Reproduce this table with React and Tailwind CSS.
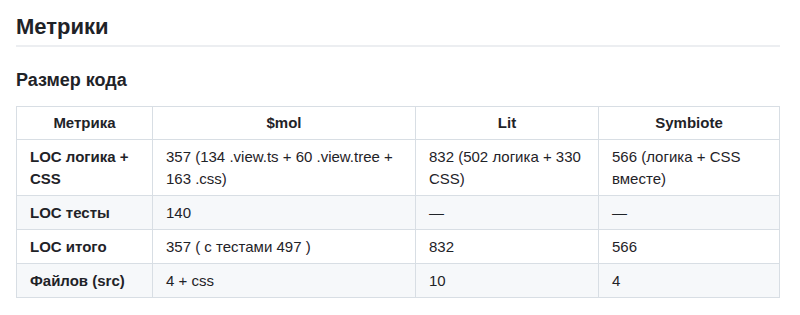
const rows = [
  ["LOC логика + CSS", "357 (134 .view.ts + 60 .view.tree + 163 .css)", "832 (502 логика + 330 CSS)", "566 (логика + CSS вместе)"],
  ["LOC тесты", "140", "—", "—"],
  ["LOC итого", "357 ( с тестами 497 )", "832", "566"],
  ["Файлов (src)", "4 + css", "10", "4"],
];

export default function App() {
  return (
    <div
      className="bg-white text-[#1f2328] pl-4 pt-[12px] w-[800px] h-[315px] overflow-hidden"
      style={{ fontFamily: '"Liberation Sans", Arial, sans-serif' }}
    >
      <div className="w-[764px]">
        {/* H1 */}
        <h1 className="text-[22px] font-bold leading-[30px] pb-[3px] border-b-2 border-[#eceef1]">Метрики</h1>

        {/* H2 */}
        <h2 className="text-[18px] font-bold leading-[24px] mt-[21px] mb-[14px]">Размер кода</h2>

        <table className="table-fixed border-collapse text-[15px] leading-[22px] w-[763px]">
          <colgroup>
            <col className="w-[136px]" />
            <col className="w-[263px]" />
            <col className="w-[183px]" />
            <col className="w-[181px]" />
          </colgroup>
          <thead>
            <tr className="h-[33px]">
              {["Метрика", "$mol", "Lit", "Symbiote"].map((h) => (
                <th key={h} className="border border-[#d8dee4] px-[13px] py-[5px] font-bold text-center">
                  {h}
                </th>
              ))}
            </tr>
          </thead>
          <tbody>
            {rows.map((r, i) => (
              <tr key={i} className={i % 2 === 1 ? "bg-[#f6f8fa]" : "bg-white"}>
                {r.map((c, j) => (
                  <td
                    key={j}
                    className={`border border-[#d8dee4] px-[13px] pt-[6px] pb-[5px] align-middle ${j === 0 ? "font-bold" : ""}`}
                  >
                    {c}
                  </td>
                ))}
              </tr>
            ))}
          </tbody>
        </table>
      </div>
    </div>
  );
}
